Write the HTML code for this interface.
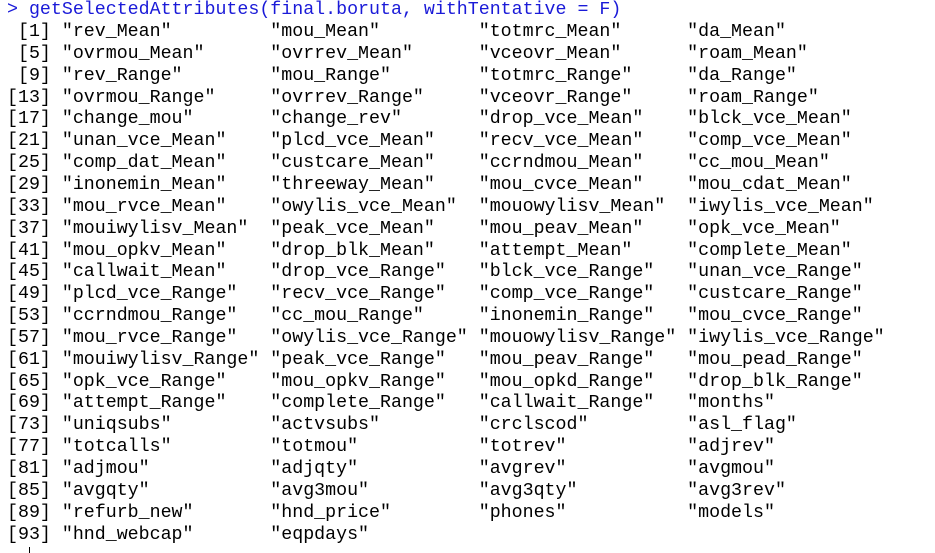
<!DOCTYPE html>
<html><head><meta charset="utf-8"><style>
html,body{margin:0;padding:0;background:#fff;width:935px;height:553px;overflow:hidden}
div.l{position:absolute;left:7px;height:21px;margin:0;font-family:"Liberation Mono",monospace;font-size:18.3px;line-height:21px;color:#000;white-space:pre}
div.p{color:#1a1ad8}
</style></head><body>
<div class="l p" style="top:0px">&gt; getSelectedAttributes(final.boruta, withTentative = F)</div>
<div class="l" style="top:22px"> [1] "rev_Mean"         "mou_Mean"         "totmrc_Mean"      "da_Mean"</div>
<div class="l" style="top:43.85px"> [5] "ovrmou_Mean"      "ovrrev_Mean"      "vceovr_Mean"      "roam_Mean"</div>
<div class="l" style="top:65.7px"> [9] "rev_Range"        "mou_Range"        "totmrc_Range"     "da_Range"</div>
<div class="l" style="top:87.55px">[13] "ovrmou_Range"     "ovrrev_Range"     "vceovr_Range"     "roam_Range"</div>
<div class="l" style="top:109.4px">[17] "change_mou"       "change_rev"       "drop_vce_Mean"    "blck_vce_Mean"</div>
<div class="l" style="top:131.25px">[21] "unan_vce_Mean"    "plcd_vce_Mean"    "recv_vce_Mean"    "comp_vce_Mean"</div>
<div class="l" style="top:153.1px">[25] "comp_dat_Mean"    "custcare_Mean"    "ccrndmou_Mean"    "cc_mou_Mean"</div>
<div class="l" style="top:174.95px">[29] "inonemin_Mean"    "threeway_Mean"    "mou_cvce_Mean"    "mou_cdat_Mean"</div>
<div class="l" style="top:196.8px">[33] "mou_rvce_Mean"    "owylis_vce_Mean"  "mouowylisv_Mean"  "iwylis_vce_Mean"</div>
<div class="l" style="top:218.65px">[37] "mouiwylisv_Mean"  "peak_vce_Mean"    "mou_peav_Mean"    "opk_vce_Mean"</div>
<div class="l" style="top:240.5px">[41] "mou_opkv_Mean"    "drop_blk_Mean"    "attempt_Mean"     "complete_Mean"</div>
<div class="l" style="top:262.35px">[45] "callwait_Mean"    "drop_vce_Range"   "blck_vce_Range"   "unan_vce_Range"</div>
<div class="l" style="top:284.2px">[49] "plcd_vce_Range"   "recv_vce_Range"   "comp_vce_Range"   "custcare_Range"</div>
<div class="l" style="top:306.05px">[53] "ccrndmou_Range"   "cc_mou_Range"     "inonemin_Range"   "mou_cvce_Range"</div>
<div class="l" style="top:327.9px">[57] "mou_rvce_Range"   "owylis_vce_Range" "mouowylisv_Range" "iwylis_vce_Range"</div>
<div class="l" style="top:349.75px">[61] "mouiwylisv_Range" "peak_vce_Range"   "mou_peav_Range"   "mou_pead_Range"</div>
<div class="l" style="top:371.6px">[65] "opk_vce_Range"    "mou_opkv_Range"   "mou_opkd_Range"   "drop_blk_Range"</div>
<div class="l" style="top:393.45px">[69] "attempt_Range"    "complete_Range"   "callwait_Range"   "months"</div>
<div class="l" style="top:415.3px">[73] "uniqsubs"         "actvsubs"         "crclscod"         "asl_flag"</div>
<div class="l" style="top:437.15px">[77] "totcalls"         "totmou"           "totrev"           "adjrev"</div>
<div class="l" style="top:459px">[81] "adjmou"           "adjqty"           "avgrev"           "avgmou"</div>
<div class="l" style="top:480.85px">[85] "avgqty"           "avg3mou"          "avg3qty"          "avg3rev"</div>
<div class="l" style="top:502.7px">[89] "refurb_new"       "hnd_price"        "phones"           "models"</div>
<div class="l" style="top:524.55px">[93] "hnd_webcap"       "eqpdays"</div>
<div style="position:absolute;left:29px;top:547px;width:1px;height:6px;background:#000"></div>
</body></html>
